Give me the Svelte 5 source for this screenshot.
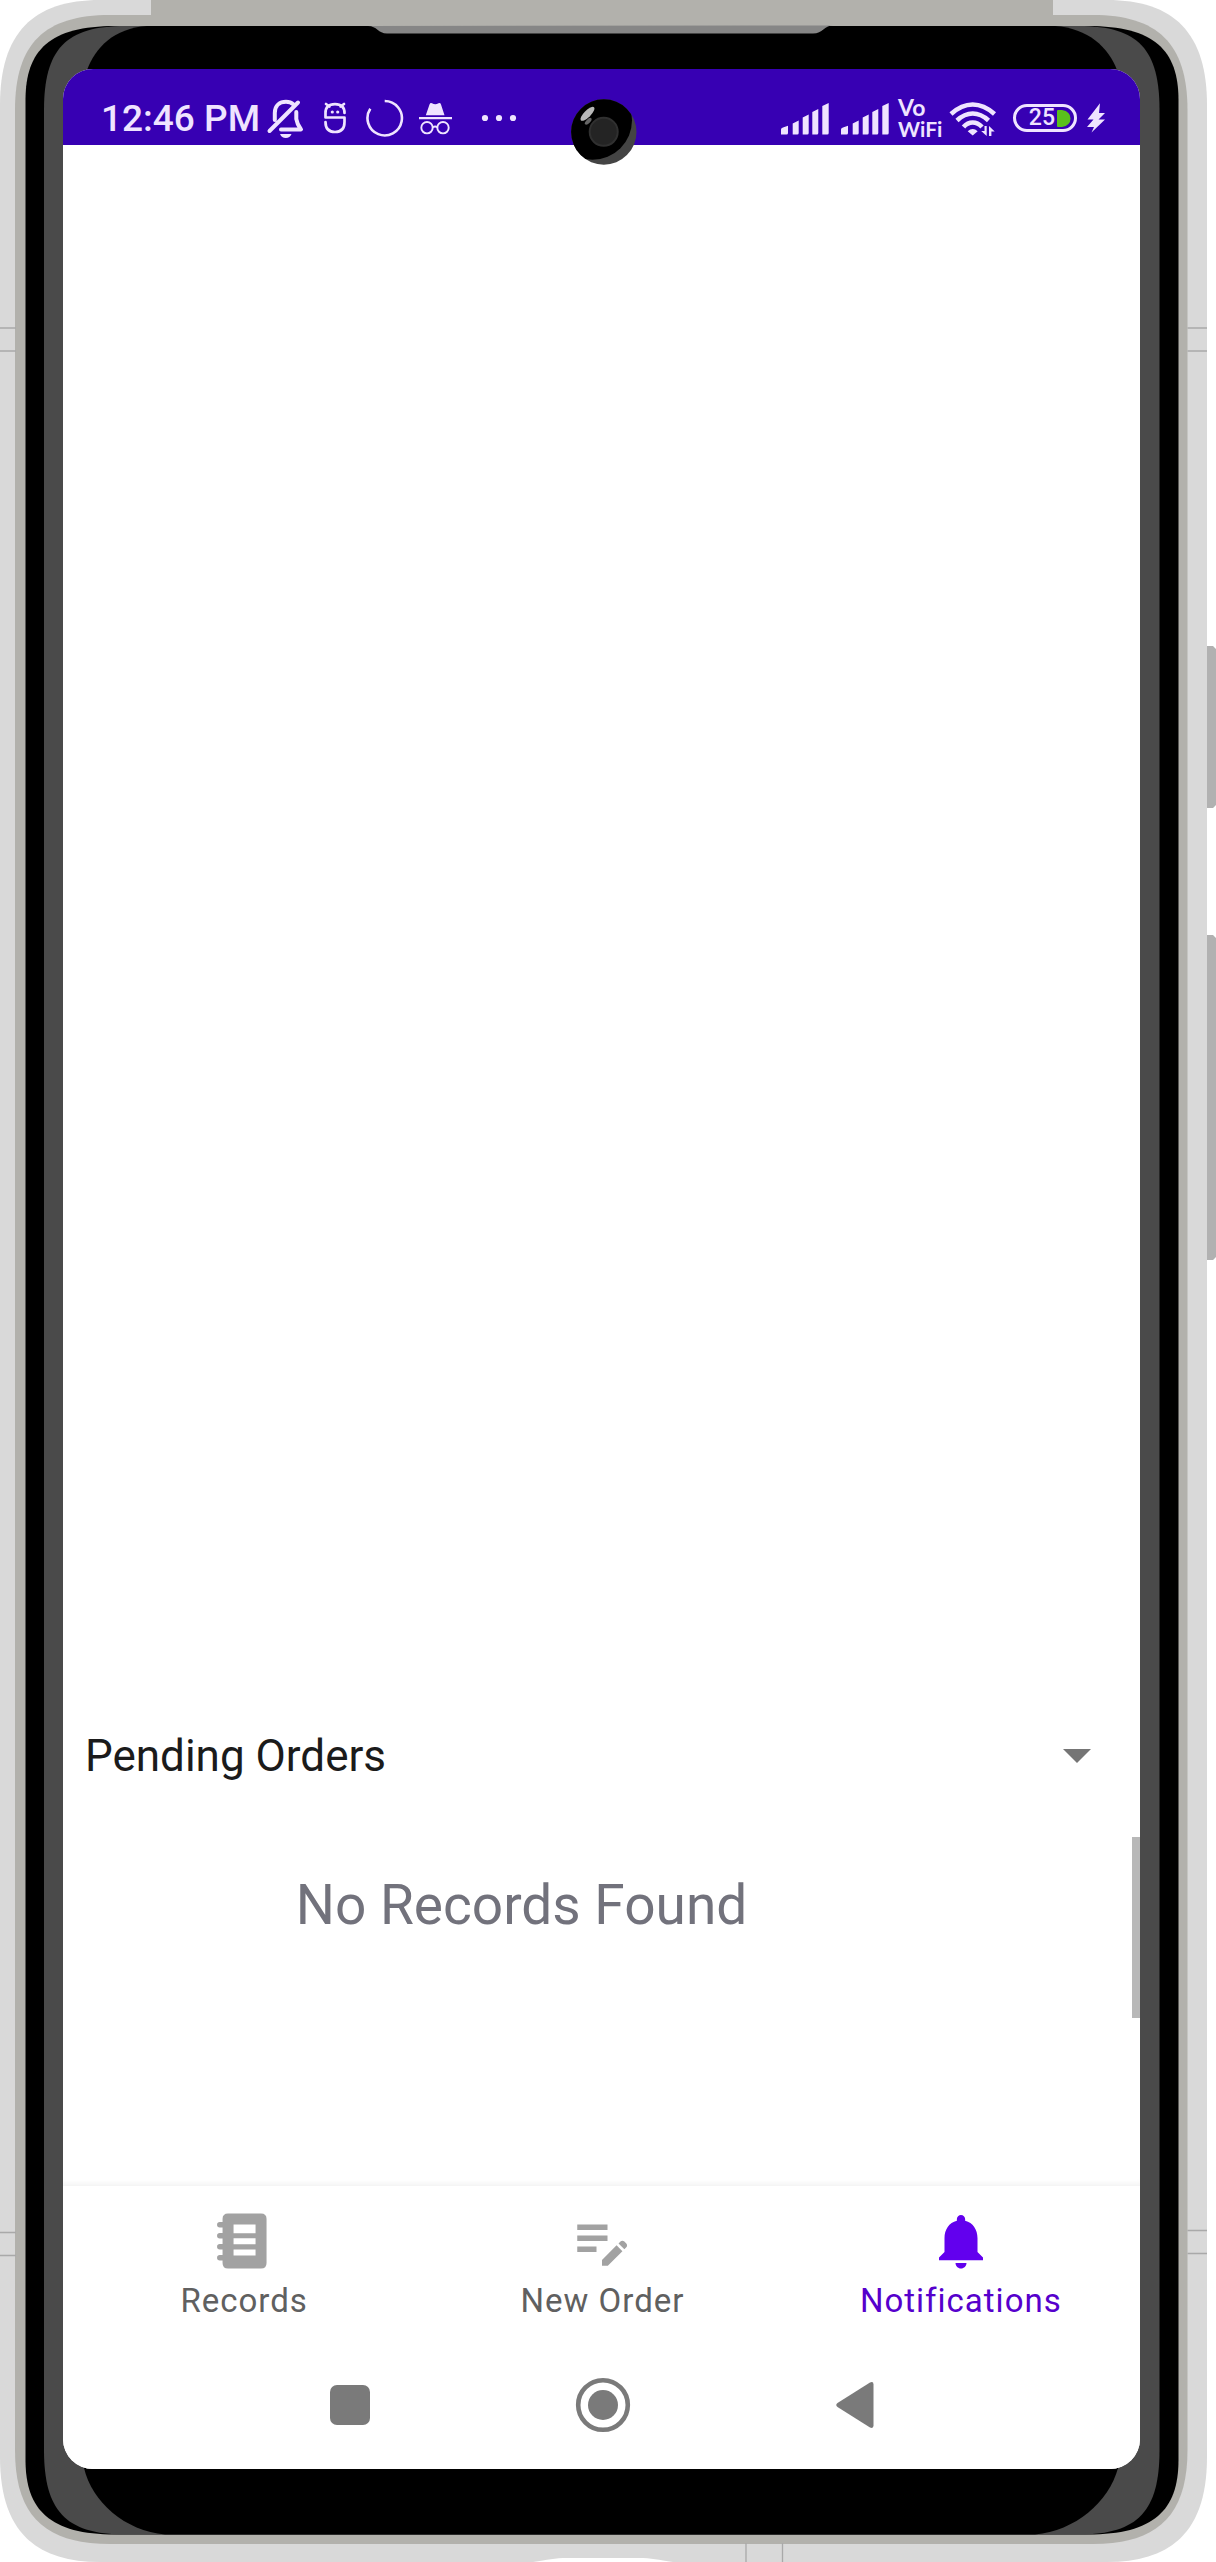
<script>
  const tabs = [
    { id: 'records', label: 'Records' },
    { id: 'order', label: 'New Order' },
    { id: 'notifications', label: 'Notifications' }
  ];
  let active = $state('notifications');
  let filter = $state('Pending Orders');
</script>

{#snippet signal()}
  <svg class="signal" width="48" height="42" viewBox="781 97 48 42" aria-hidden="true">
    <path d="M781 134.500v-5q0-1.500 2-2l5-1.800v7.300q0 1.500-1.500 1.500zM792.700 134.500v-11l6-3v12.500q0 1.500-1.500 1.500zM802.700 134.500v-17l6-3v18.500q0 1.500-1.500 1.500zM812.300 134.500v-22.500l6-3v24q0 1.500-1.500 1.500zM822.300 134.500v-28.500l6.400-3v30q0 1.500-1.500 1.500z" />
  </svg>
{/snippet}

<div class="phone">
  <svg class="frame" viewBox="0 0 1216 2562" preserveAspectRatio="none" aria-hidden="true">
    <path fill="#b1b1b1" d="M1200 646h13l3 3v156l-3 3h-13zM1200 935h13l3 3v319l-3 3h-13z" />
    <path fill="#d9d9d9" d="M0 105C0 33 33 0 100 0H1107C1174 0 1207 33 1207 105V2457C1207 2529 1174 2562 1107 2562H100C33 2562 0 2529 0 2457Z" />
    <path fill="#b2b1ac" d="M151 0H1053V16H151Z" />
    <path fill="#b2b1ac" d="M15 110C15 43 45 15 110 15H1093C1157 15 1187.500 43 1187.500 110V2450C1187.500 2516 1157 2544 1093 2544H110C45 2544 15 2516 15 2450Z" />
    <path fill="#000" d="M25.500 100C25.500 50 50 26 115 26H1088C1154 26 1178.500 50 1178.500 100V2460C1178.500 2510 1154 2534.500 1088 2534.500H115C50 2534.500 25.500 2510 25.500 2460Z" />
    <path fill="#4a4a4a" d="M44 110C44 50 65 26 125 26H1079C1139 26 1159.500 50 1159.500 110V2450C1159.500 2510 1139 2534.500 1079 2534.500H125C65 2534.500 44 2510 44 2450Z" />
    <path fill="#000" d="M87 70C95 48 114 28 147 26H1055C1088 28 1109 48 1117 70L1118 2468C1109 2502 1075 2531 1035 2534.500H165C125 2531 92 2502 84 2468Z" />
    <path fill="#868686" d="M368 26C377 26 378 33.500 387 33.500H813C823 33.500 824 25.500 833 25.500Z" />
    <path fill="none" stroke="#a9a9a9" stroke-width="1.300" d="M0 328H16M0 351H16M1187.500 328H1207M1187.500 351H1207M0 2232.500H16M0 2255.500H16M1187.500 2230.500H1207M1187.500 2253.500H1207M746 2543V2562M782.500 2543V2562" />
    <path fill="#fff" d="M533 2562C548 2560 554 2558 568 2558H638C652 2558 658 2560 673 2562Z" />
  </svg>

  <div class="screen">
    <header class="status">
      <div class="group">
        <time>12:46 PM</time>
        <svg width="42" height="42" viewBox="264 97 42 42" aria-label="Muted">
          <path class="line" stroke-width="4" d="M269.500 131 298 102.500M274.800 120V113C274.800 105 280 101.800 286 101.800Q290.500 101.800 293.500 104.500M296.300 112V119Q297 124 301 129.500H281" />
          <path d="M280 134h11.500q-1.500 4-5.700 4t-5.800-4z" />
        </svg>
        <svg class="robot" width="24" height="42" viewBox="323 97 24 42" aria-label="Assistant">
          <path class="line" stroke-width="2.700" d="M344.500 113C344.500 107 341 104.200 335 104.200S325.500 107 325.500 113V117.500H344.500V122C344.500 129 341 132 335 132S325.500 129 325.500 122M326 104l3.500 2.500M344 104l-3.500 2.500" />
          <circle cx="332.300" cy="112" r="1.600" /><circle cx="337.700" cy="112" r="1.600" />
        </svg>
        <svg class="ring" width="38" height="42" viewBox="366 97 38 42" aria-label="Syncing">
          <path class="line flat" stroke-width="2.600" d="M384.700 101A17.200 17.200 0 1 1 370.300 108.800" />
        </svg>
        <svg class="spy" width="34" height="42" viewBox="419 97 34 42" aria-label="Private">
          <path d="M425.800 115.200 429.500 104.500Q430.200 102.500 432 103.300 435.300 105 438.500 103.300 440.300 102.500 441 104.500L444.500 115.200ZM419 117h33v2.300h-33z" />
          <path class="line" stroke-width="1.800" d="M432.800 127.300q2.300-1.600 4.500 0" />
          <circle class="line" stroke-width="1.900" cx="427" cy="127.700" r="5.700" /><circle class="line" stroke-width="1.900" cx="443" cy="127.700" r="5.700" />
        </svg>
        <svg class="dots" width="36" height="42" viewBox="481 97 36 42" aria-label="More">
          <circle cx="485" cy="118" r="3.100" /><circle cx="499" cy="118" r="3.100" /><circle cx="513" cy="118" r="3.100" />
        </svg>
      </div>

      <div class="group">
        {@render signal()}
        {@render signal()}
        <div class="vowifi"><span class="vo">Vo</span><span>WiFi</span></div>
        <svg class="wifi" width="48" height="42" viewBox="949 97 48 42" aria-label="Wi-Fi">
          <path class="line flat" stroke-width="4.600" d="M951 114Q961.500 104.500 972.700 104.500T994.500 114M957 120.500Q964.500 113.500 972.700 113.500T988.500 120.500M963.500 127Q967.500 122.500 972.700 122.500T982 127" />
          <path d="M967.700 131.200Q972.700 127 977.700 131.200L972.700 135.500ZM984.500 126h2.200v10l-5.500-5h3.300zM989 136v-10l5.700 5.500h-3.300v4.500z" />
        </svg>
        <div class="battery">
          <span>25</span>
          <svg width="14" height="17" viewBox="0 0 14 17" aria-hidden="true"><path class="charge" d="M1 0H5Q13.500 1.500 13.500 8.500T5 17H1Q0 17 0 16V1Q0 0 1 0Z" /></svg>
        </div>
        <svg class="bolt" width="20" height="42" viewBox="1086 97 20 42" aria-label="Charging">
          <path d="M1100 103.300 1087.500 119.500H1093.500L1087 127H1094L1091.500 132.500 1105 119.500H1098.500L1105 113H1099Z" />
        </svg>
      </div>
    </header>

    <svg class="camera" width="66" height="66" viewBox="570.500 98.700 66 66" aria-hidden="true">
      <defs><clipPath id="lens"><circle cx="603.300" cy="131.700" r="32.700" /></clipPath></defs>
      <circle cx="603.300" cy="131.700" r="32.700" fill="#444" />
      <circle cx="592" cy="120" r="39.500" fill="#000" clip-path="url(#lens)" />
      <circle cx="603.200" cy="131.500" r="14" fill="#242424" stroke="#303030" stroke-width="2" />
      <ellipse cx="587" cy="113.500" rx="3.400" ry="9.300" fill="#b8b8b8" transform="rotate(45 587 113.500)" />
      <ellipse cx="587.700" cy="121" rx="2" ry="4.300" fill="#666" transform="rotate(45 587.700 121)" />
    </svg>

    <main>
      <div class="picker">
        <select bind:value={filter} aria-label="Order filter">
          <option>Pending Orders</option>
        </select>
        <svg width="28" height="14" viewBox="0 0 28 14" aria-hidden="true"><path fill="#757575" d="M0 0H28L14 14Z" /></svg>
      </div>
      <section class="list">
        <p>No Records Found</p>
        <div class="thumb"></div>
      </section>
    </main>

    <nav class="tabs" aria-label="Main">
      {#each tabs as tab (tab.id)}
        <button class:active={active === tab.id} onclick={() => (active = tab.id)}>
          <svg width="66" height="66" viewBox="0 0 24 24" aria-hidden="true">
            {#if tab.id === 'records'}
              <path fill-rule="evenodd" d="M6.200 2h12q2 0 2 2v16q0 2-2 2h-12q-2 0-2-2V4q0-2 2-2zM8.200 6v3.200h8V6zM8.200 11v2.200h8V11zM8.200 15.100v2.200h8v-2.200z" />
              <path d="M5 5.100H3.200a1 1 0 0 0 0 2H5zM5 9.100H3.200a1 1 0 0 0 0 2H5zM5 13.100H3.200a1 1 0 0 0 0 2H5zM5 17.100H3.200a1 1 0 0 0 0 2H5z" />
            {:else if tab.id === 'order'}
              <path d="M3 10h11v2H3v-2zm0-2h11V6H3v2zm0 8h7v-2H3v2zm15.010-3.130.71-.71c.39-.39 1.020-.39 1.410 0l.71.71c.39.39.39 1.020 0 1.410l-.71.71-2.120-2.120zm-.71.71-5.300 5.300V21h2.120l5.300-5.300-2.120-2.120z" />
            {:else}
              <path d="M12 22c1.100 0 2-.9 2-2h-4c0 1.100.89 2 2 2zm6-6v-5c0-3.070-1.640-5.640-4.500-6.320V4c0-.83-.67-1.500-1.500-1.500s-1.500.67-1.500 1.500v.68C7.630 5.360 6 7.920 6 11v5l-2 2v1h16v-1l-2-2z" />
            {/if}
          </svg>
          <span>{tab.label}</span>
        </button>
      {/each}
    </nav>

    <nav class="system" aria-label="System">
      <button aria-label="Recent apps"><svg width="60" height="60" viewBox="0 0 60 60"><rect x="10" y="10" width="40" height="40" rx="7" /></svg></button>
      <button aria-label="Home"><svg width="60" height="60" viewBox="0 0 60 60"><circle cx="30" cy="30" r="24.800" fill="none" stroke="#7a7a7a" stroke-width="4.600" /><circle cx="30" cy="30" r="15" /></svg></button>
      <button aria-label="Back"><svg width="60" height="60" viewBox="0 0 60 60"><path d="M11.500 28 44 7.500Q47.500 6 47.500 9.500V50.500Q47.500 54 44 52.500L11.500 32Q9 30 11.500 28Z" /></svg></button>
    </nav>
  </div>
</div>

<style>
  :global(body) {
    background: #fff;
  }
  .phone {
    position: relative;
    box-sizing: border-box;
    display: flex;
    min-height: 100vh;
    padding: 69px 76px 93px 63px;
    font-family: Roboto, 'Liberation Sans', sans-serif;
  }
  .frame {
    position: absolute;
    inset: 0;
    width: 100%;
    height: 100%;
  }
  .screen {
    position: relative;
    flex: 1;
    display: flex;
    flex-direction: column;
    overflow: hidden;
    border-radius: 30px;
    background: #fff;
  }
  button,
  select {
    appearance: none;
    border: 0;
    padding: 0;
    background: none;
    font: inherit;
  }
  svg {
    display: block;
    flex: none;
  }
  .status {
    box-sizing: border-box;
    height: 76px;
    padding: 28px 34px 0 38px;
    display: flex;
    justify-content: space-between;
    background: #3700b3;
    color: #efe4ff;
    fill: #efe4ff;
  }
  .group {
    display: flex;
    height: 42px;
    align-items: center;
  }
  time {
    padding-top: 2px;
    font-size: 37px;
    line-height: 42px;
    font-weight: 500;
    margin-right: 4px;
  }
  .line {
    fill: none;
    stroke: #efe4ff;
    stroke-linecap: round;
    stroke-linejoin: round;
  }
  .flat {
    stroke-linecap: butt;
  }
  .robot {
    margin-left: 17px;
  }
  .ring {
    margin-left: 19px;
  }
  .spy {
    margin-left: 15px;
  }
  .dots {
    margin-left: 28px;
  }
  .signal {
    margin-right: 12px;
  }
  .vowifi {
    width: 42px;
    margin-right: 9px;
    margin-left: -3px;
    display: flex;
    flex-direction: column;
    font-family: Lato, sans-serif;
    font-size: 21px;
    line-height: 21px;
    font-weight: 700;
  }
  .vo {
    font-size: 23px;
  }
  .wifi {
    margin-right: 16px;
  }
  .battery {
    box-sizing: border-box;
    width: 64px;
    height: 28px;
    padding-right: 3px;
    border: 3px solid #efe4ff;
    border-radius: 14px;
    display: flex;
    align-items: center;
    justify-content: flex-end;
    gap: 2px;
    font-size: 23px;
    line-height: 22px;
    font-weight: 500;
  }
  .charge {
    fill: #5ac01c;
  }
  .bolt {
    margin-left: 9px;
  }
  .camera {
    position: absolute;
    top: 30px;
    left: 50%;
    margin-left: -31px;
  }
  main {
    flex: 1;
    display: flex;
    flex-direction: column;
    justify-content: flex-end;
  }
  .picker {
    position: relative;
    display: flex;
    align-items: center;
    height: 90px;
    margin-bottom: 36px;
  }
  select {
    width: 100%;
    height: 100%;
    padding: 0 22px;
    color: #1b1b1b;
    font-size: 44px;
  }
  .picker svg {
    position: absolute;
    right: 49px;
    pointer-events: none;
  }
  .list {
    position: relative;
    min-height: 349px;
    box-shadow: inset 0 -6px 5px -3px #f4f4f4;
  }
  .list p {
    margin: 0;
    padding: 36px 160px 0 0;
    text-align: center;
    color: #72727c;
    font-size: 55px;
    line-height: 64px;
  }
  .thumb {
    position: absolute;
    top: 0;
    right: 0;
    width: 8px;
    height: 181px;
    background: #b8b8b8;
  }
  .tabs {
    display: grid;
    grid-template-columns: repeat(3, 1fr);
    height: 154px;
    padding-left: 2px;
    background: #fff;
  }
  .tabs button {
    display: flex;
    flex-direction: column;
    align-items: center;
    padding-top: 22px;
    gap: 7px;
    color: #606060;
    fill: #a2a2a2;
    font-size: 33px;
    line-height: 40px;
    letter-spacing: 1px;
  }
  .tabs .active {
    color: #5600cc;
    fill: #6200ee;
  }
  .system {
    display: flex;
    justify-content: center;
    align-items: center;
    gap: 193px;
    height: 129px;
    padding-left: 2px;
    background: #fff;
    fill: #7a7a7a;
  }
</style>
